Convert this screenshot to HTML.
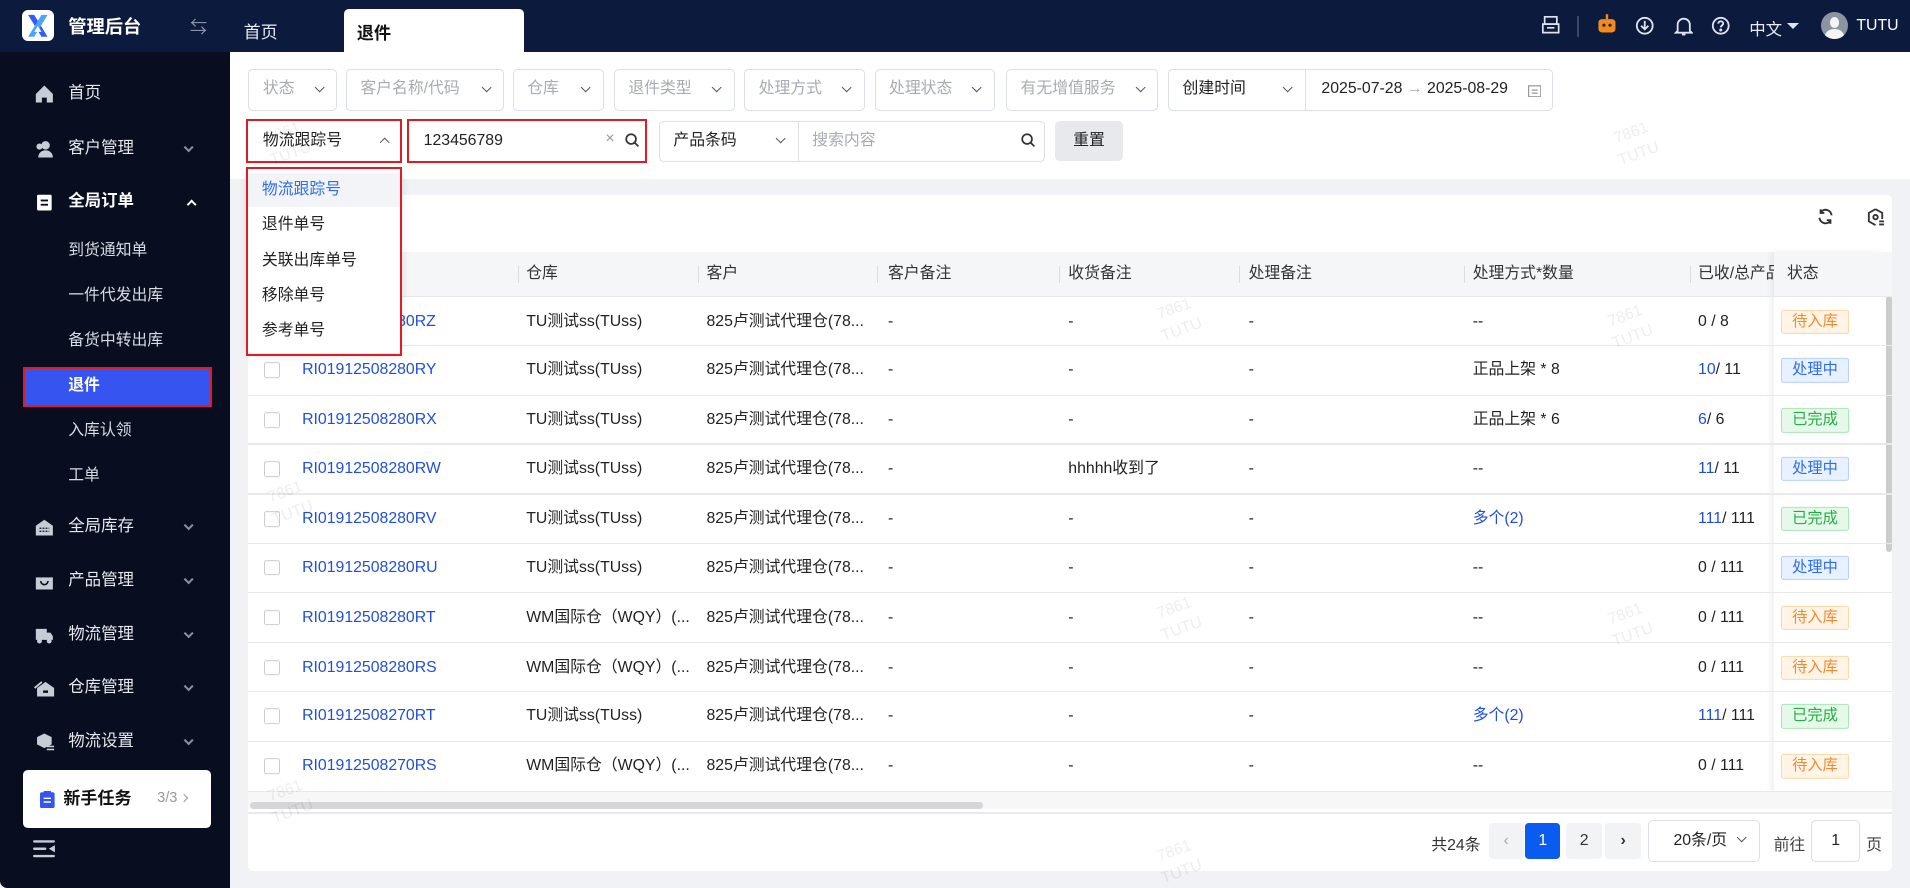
<!DOCTYPE html>
<html><head><meta charset="utf-8"><style>
*{box-sizing:border-box;margin:0;padding:0}
html,body{width:1910px;height:888px;overflow:hidden;background:#f0f2f5}
#root{zoom:1.21811;width:1568px;height:729px;position:relative;font-family:"Liberation Sans","Noto Sans CJK SC",sans-serif;font-size:13px;color:#222;background:#f0f2f5}
.a{position:absolute}
.hdr{left:0;top:0;width:1568px;height:43px;background:#0b1a3d}
.side{left:0;top:43px;width:189px;height:686px;background:#080d20;border-bottom-left-radius:6px}
.si{position:absolute;left:56px;color:#e6e8ee;font-size:13.5px;line-height:18px;transform:translateY(-50%)}
.sic{position:absolute;left:28px;width:17px;height:16px;transform:translateY(-50%)}
.chev{position:absolute;left:152px;width:6px;height:6px;border-right:2px solid #8a90a0;border-bottom:2px solid #8a90a0;transform:translateY(-70%) rotate(45deg)}
.sub{position:absolute;left:56px;color:#d8dbe3;font-size:13px;line-height:18px;transform:translateY(-50%)}
.box{position:absolute;height:34px;border:1px solid #dcdfe6;border-radius:4px;background:#fff;color:#a8abb2;font-size:13px;line-height:32px;padding-left:11px}
.dv{position:absolute;right:11px;top:11px;width:6px;height:6px;border-right:1.5px solid #555;border-bottom:1.5px solid #555;transform:rotate(45deg)}
.th{position:absolute;top:225px;transform:translateY(-50%);color:#333;font-size:13px;line-height:18px}
.sep{position:absolute;top:218px;width:1px;height:14px;background:#ddd}
.cell{position:absolute;transform:translateY(-50%);font-size:13px;line-height:18px;height:18px;color:#222;white-space:nowrap}
.lk{color:#1f4fe0}
.tag{position:absolute;left:1462px;width:56px;height:20px;transform:translateY(-50%);border-radius:2px;font-size:12.5px;text-align:center;line-height:18px;border:1px solid}
.t1{color:#f08a2c;background:#fff4e6;border-color:#ffd8a8}
.t2{color:#2d6df0;background:#e8f1ff;border-color:#b6d0ff}
.t3{color:#22b042;background:#e6f8ea;border-color:#a9e6b6}
.cb{position:absolute;left:217px;width:13px;height:13px;border:1px solid #ccc;border-radius:2px;transform:translateY(-50%);background:#fff}
.rl{position:absolute;left:204px;width:1349px;height:1px;background:#e8e9ec}
.wm{position:absolute;color:rgba(0,0,0,0.07);font-size:13px;transform:rotate(-20deg);line-height:18px;text-align:center}
.pg{position:absolute;top:676px;height:29px;border-radius:3px;background:#f2f3f5;text-align:center;line-height:29px;font-size:13px}
</style></head><body><div id="root">

<div class="a hdr"></div>
<div class="a" style="left:18px;top:8px;width:26px;height:26px;background:#fff;border-radius:5px">
<svg width="26" height="26" viewBox="0 0 26 26"><path d="M5 4h5l11 18h-5z" fill="#2f5bff"/><path d="M21 4h-5L5 22h5z" fill="#4aa3ff"/><path d="M13 13l3 5h-6z" fill="#fff"/></svg></div>
<div class="a" style="left:56px;top:11px;color:#fff;font-weight:bold;font-size:15px">管理后台</div>
<div class="a" style="left:156px;top:11px;color:#8a93a8;font-size:14px">⇆</div>
<div class="a" style="left:200px;top:15px;color:#e8ecf5;font-size:14px">首页</div>
<div class="a" style="left:282px;top:7px;width:148px;height:36px;background:#fff;border-radius:4px 4px 0 0"></div>
<div class="a" style="left:293px;top:16px;color:#111;font-weight:bold;font-size:14px">退件</div>
<svg class="a" style="left:1265px;top:12px" width="16" height="16" viewBox="0 0 16 16" fill="none" stroke="#dfe3ec" stroke-width="1.4"><rect x="3" y="1.5" width="10" height="6"/><path d="M1.5 7.5h13v7h-13z"/><path d="M5 10.5h6"/></svg>
<div class="a" style="left:1295px;top:13px;width:1px;height:17px;background:#3a4766"></div>
<svg class="a" style="left:1310px;top:11px" width="18" height="18" viewBox="0 0 18 18"><rect x="2" y="5" width="14" height="11" rx="3" fill="#f28a1c"/><rect x="8" y="1" width="2" height="4" fill="#f28a1c"/><circle cx="6.5" cy="10" r="1.3" fill="#222"/><circle cx="11.5" cy="10" r="1.3" fill="#222"/></svg>
<svg class="a" style="left:1342px;top:13px" width="16" height="16" viewBox="0 0 16 16" fill="none" stroke="#dfe3ec" stroke-width="1.5"><circle cx="8" cy="8" r="6.5"/><path d="M8 4v7M5 8l3 3 3-3"/></svg>
<svg class="a" style="left:1374px;top:12px" width="16" height="18" viewBox="0 0 16 18" fill="none" stroke="#dfe3ec" stroke-width="1.5"><path d="M3 13V8a5 5 0 0110 0v5l1.5 1.5h-13z"/><path d="M6.5 16h3"/></svg>
<svg class="a" style="left:1405px;top:13px" width="16" height="16" viewBox="0 0 16 16" fill="none" stroke="#dfe3ec" stroke-width="1.5"><circle cx="8" cy="8" r="6.5"/><path d="M6 6.3a2 2 0 114 0c0 1.3-2 1.5-2 3"/><circle cx="8" cy="11.5" r=".5" fill="#dfe3ec"/></svg>
<div class="a" style="left:1436px;top:13px;color:#e8ecf5;font-size:13.5px">中文</div>
<div class="a" style="left:1467px;top:19px;width:0;height:0;border-left:5px solid transparent;border-right:5px solid transparent;border-top:5px solid #dfe3ec"></div>
<div class="a" style="left:1495px;top:10px;width:22px;height:22px;border-radius:50%;background:#8c93a3;overflow:hidden"><div style="position:absolute;left:7px;top:4px;width:8px;height:9px;border-radius:50%;background:#f4f4f4"></div><div style="position:absolute;left:3px;top:14px;width:16px;height:12px;border-radius:50%;background:#f4f4f4"></div></div>
<div class="a" style="left:1524px;top:14px;color:#fff;font-size:13px">TUTU</div>

<div class="a side"></div>
<svg class="sic" style="top:77px" viewBox="0 0 16 16"><path d="M8 1L1 8v7h5v-4h4v4h5V8z" fill="#c8ccd6"/></svg><div class="si" style="top:77px">首页</div>
<svg class="sic" style="top:122px" viewBox="0 0 16 16"><circle cx="9" cy="5" r="3.5" fill="#c8ccd6"/><path d="M3 15c0-4 3-6 6-6s6 2 6 6z" fill="#c8ccd6"/><circle cx="4" cy="6" r="2.5" fill="#c8ccd6"/></svg><div class="si" style="top:122px">客户管理</div><div class="chev" style="top:122px"></div>
<svg class="sic" style="top:166px" viewBox="0 0 16 16"><rect x="2" y="2" width="12" height="13" rx="1" fill="#fff"/><rect x="5" y="6" width="6" height="1.5" fill="#080d20"/><rect x="5" y="9.5" width="6" height="1.5" fill="#080d20"/></svg><div class="si" style="top:166px;font-weight:bold;color:#fff">全局订单</div>
<div class="a" style="left:154px;top:165px;width:6px;height:6px;border-left:2px solid #fff;border-top:2px solid #fff;transform:rotate(45deg)"></div>
<div class="sub" style="top:206px">到货通知单</div>
<div class="sub" style="top:243px">一件代发出库</div>
<div class="sub" style="top:280px">备货中转出库</div>
<div class="a" style="left:19px;top:301px;width:155px;height:33px;background:#3554f0;border:2px solid #e01b24"></div>
<div class="sub" style="top:317px;color:#fff;font-weight:bold">退件</div>
<div class="sub" style="top:354px">入库认领</div>
<div class="sub" style="top:391px">工单</div>
<svg class="sic" style="top:433px" viewBox="0 0 16 16"><path d="M1 15V7l7-5 7 5v8z" fill="#c8ccd6"/><path d="M4 9h8M4 11.5h8" stroke="#080d20" stroke-dasharray="1.5 1"/></svg><div class="si" style="top:433px">全局库存</div><div class="chev" style="top:433px"></div>
<svg class="sic" style="top:477px" viewBox="0 0 16 16"><path d="M1 5h14v10H1z" fill="#c8ccd6"/><path d="M5 5a3 3 0 016 0M5 8a3 3 0 006 0" stroke="#080d20" fill="none" stroke-width="1.3"/></svg><div class="si" style="top:477px">产品管理</div><div class="chev" style="top:477px"></div>
<svg class="sic" style="top:521px" viewBox="0 0 16 16"><path d="M1 3h9v9H1zM10 6h3l2 3v3h-5z" fill="#c8ccd6"/><circle cx="4" cy="13" r="2" fill="#c8ccd6"/><circle cx="12" cy="13" r="2" fill="#c8ccd6"/></svg><div class="si" style="top:521px">物流管理</div><div class="chev" style="top:521px"></div>
<svg class="sic" style="top:565px" viewBox="0 0 16 16"><path d="M2 15V8l7-5 7 5v7z" fill="#c8ccd6"/><path d="M0 8l6-5" stroke="#c8ccd6" stroke-width="1.5"/><rect x="7" y="10" width="4" height="2" fill="#080d20"/></svg><div class="si" style="top:565px">仓库管理</div><div class="chev" style="top:565px"></div>
<svg class="sic" style="top:609px" viewBox="0 0 16 16"><path d="M8 1l6 3v6l-6 3-6-3V4z" fill="#c8ccd6"/><rect x="10" y="11" width="6" height="1.3" fill="#c8ccd6"/><rect x="10" y="13.5" width="6" height="1.3" fill="#c8ccd6"/></svg><div class="si" style="top:609px">物流设置</div><div class="chev" style="top:609px"></div>
<div class="a" style="left:19px;top:632px;width:154px;height:48px;background:#fff;border-radius:4px"></div>
<svg class="a" style="left:33px;top:649px" width="12" height="14" viewBox="0 0 12 14"><rect x="0" y="1" width="12" height="13" rx="1.5" fill="#3554f0"/><rect x="3" y="0" width="6" height="3" fill="#3554f0"/><path d="M3 6h6M3 9h6" stroke="#fff" stroke-width="1.2"/></svg>
<div class="a" style="left:52px;top:646px;font-weight:bold;font-size:14px;line-height:20px;color:#111">新手任务</div>
<div class="a" style="left:129px;top:648px;font-size:12px;line-height:16px;color:#999">3/3</div>
<div class="a" style="left:149px;top:653px;width:5px;height:5px;border-right:1.5px solid #999;border-top:1.5px solid #999;transform:rotate(45deg)"></div>
<svg class="a" style="left:27px;top:689px" width="18" height="16" viewBox="0 0 18 16" fill="#c8ccd6"><rect x="0" y="1" width="18" height="2" rx="1"/><rect x="0" y="7" width="11" height="2" rx="1"/><rect x="0" y="13" width="18" height="2" rx="1"/><path d="M18 5v6l-5-3z"/></svg>

<div class="a" style="left:189px;top:43px;width:1379px;height:104px;background:#fff"></div>
<div class="box" style="left:204px;top:57px;width:73px">状态<i class="dv"></i></div>
<div class="box" style="left:284px;top:57px;width:130px">客户名称/代码<i class="dv"></i></div>
<div class="box" style="left:421px;top:57px;width:75px">仓库<i class="dv"></i></div>
<div class="box" style="left:504px;top:57px;width:99px">退件类型<i class="dv"></i></div>
<div class="box" style="left:611px;top:57px;width:99px">处理方式<i class="dv"></i></div>
<div class="box" style="left:718px;top:57px;width:99px">处理状态<i class="dv"></i></div>
<div class="box" style="left:826px;top:57px;width:125px">有无增值服务<i class="dv"></i></div>
<div class="box" style="left:959px;top:57px;width:113px;color:#222;border-radius:4px 0 0 4px">创建时间<i class="dv"></i></div>
<div class="box" style="left:1071px;top:57px;width:204px;color:#222;border-radius:0 4px 4px 0;padding-left:13px">2025-07-28 <span style="color:#aaa">→</span> 2025-08-29</div>
<svg class="a" style="left:1254px;top:69px" width="11" height="11" viewBox="0 0 11 11" fill="none" stroke="#999"><rect x=".5" y="1.5" width="10" height="9"/><path d="M3 5h5M3 7.5h5"/></svg>

<div class="box" style="left:204px;top:99px;width:125px;color:#222;border-color:#fff;border-bottom:1px solid #2d6df0;border-radius:0">物流跟踪号</div>
<div class="a" style="left:313px;top:114px;width:6px;height:6px;border-left:1.5px solid #555;border-top:1.5px solid #555;transform:rotate(45deg)"></div>
<div class="a" style="left:202px;top:98px;width:128px;height:36px;border:2px solid #e01b24"></div>
<div class="box" style="left:336px;top:99px;width:194px;color:#222;border-color:#fff">123456789</div>
<div class="a" style="left:497px;top:107px;color:#999;font-size:13px">×</div>
<svg class="a" style="left:513px;top:109px" width="12" height="12" viewBox="0 0 12 12" fill="none" stroke="#333" stroke-width="1.4"><circle cx="5" cy="5" r="4"/><path d="M8 8l3 3"/></svg>
<div class="a" style="left:334px;top:98px;width:197px;height:36px;border:2px solid #e01b24"></div>
<div class="box" style="left:541px;top:99px;width:115px;color:#222;border-radius:4px 0 0 4px">产品条码<i class="dv"></i></div>
<div class="box" style="left:655px;top:99px;width:203px;border-radius:0 4px 4px 0">搜索内容</div>
<svg class="a" style="left:838px;top:109px" width="12" height="12" viewBox="0 0 12 12" fill="none" stroke="#333" stroke-width="1.4"><circle cx="5" cy="5" r="4"/><path d="M8 8l3 3"/></svg>
<div class="a" style="left:866px;top:99px;width:56px;height:33px;background:#e7e9ed;border-radius:4px;text-align:center;line-height:33px;color:#222">重置</div>

<div class="a" style="left:204px;top:160px;width:1349px;height:555px;background:#fff;border-radius:4px"></div>
<svg class="a" style="left:1492px;top:171px" width="14" height="14" viewBox="0 0 14 14" fill="none" stroke="#333" stroke-width="1.6"><path d="M12 6A5 5 0 003 3.5M2 8a5 5 0 009 2.5"/><path d="M3 1v3h3M11 13v-3H8"/></svg>
<svg class="a" style="left:1533px;top:171px" width="15" height="15" viewBox="0 0 15 15" fill="none" stroke="#333" stroke-width="1.5"><path d="M7 1l5.5 3v5M7 14l-5.5-3V4L7 1"/><circle cx="7" cy="7.5" r="1.8"/><path d="M10 11h4M10 13.5h4"/></svg>
<div class="a" style="left:204px;top:207px;width:1349px;height:36px;background:#f5f6f8"></div>
<div class="sep" style="left:425px"></div><div class="th" style="left:432px">仓库</div>
<div class="sep" style="left:573px"></div><div class="th" style="left:580px">客户</div>
<div class="sep" style="left:720px"></div><div class="th" style="left:729px">客户备注</div>
<div class="sep" style="left:869px"></div><div class="th" style="left:877px">收货备注</div>
<div class="sep" style="left:1017px"></div><div class="th" style="left:1025px">处理备注</div>
<div class="sep" style="left:1202px"></div><div class="th" style="left:1209px">处理方式*数量</div>
<div class="sep" style="left:1387px"></div><div class="th" style="left:1394px;width:62px;overflow:hidden;white-space:nowrap">已收/总产品</div>
<div class="a" style="left:1456px;top:207px;width:92px;height:444px;background:#fff;box-shadow:-3px 0 5px rgba(0,0,0,0.06)"></div>
<div class="a" style="left:1456px;top:207px;width:92px;height:36px;background:#f5f6f8"></div>
<div class="th" style="left:1467px">状态</div>
<div class="a" style="left:1548px;top:243px;width:5px;height:210px;background:#ccc;border-radius:3px"></div>

<div class="rl" style="top:243px"></div>
<div class="rl" style="top:283px"></div><div class="rl" style="top:324px"></div><div class="rl" style="top:364px"></div><div class="rl" style="top:405px"></div><div class="rl" style="top:446px"></div><div class="rl" style="top:486px"></div><div class="rl" style="top:527px"></div><div class="rl" style="top:567px"></div><div class="rl" style="top:608px"></div><div class="rl" style="top:649px"></div>

<div class="cb" style="top:264px"></div><div class="cell lk" style="left:248px;top:264px">RI01912508280RZ</div><div class="cell" style="left:432px;top:264px">TU测试ss(TUss)</div><div class="cell" style="left:580px;top:264px">825卢测试代理仓(78...</div><div class="cell" style="left:729px;top:264px">-</div><div class="cell" style="left:877px;top:264px">-</div><div class="cell" style="left:1025px;top:264px">-</div><div class="cell" style="left:1209px;top:264px">--</div><div class="cell" style="left:1394px;top:264px">0 / 8</div><div class="tag t1" style="top:264px">待入库</div>
<div class="cb" style="top:304px"></div><div class="cell lk" style="left:248px;top:304px">RI01912508280RY</div><div class="cell" style="left:432px;top:304px">TU测试ss(TUss)</div><div class="cell" style="left:580px;top:304px">825卢测试代理仓(78...</div><div class="cell" style="left:729px;top:304px">-</div><div class="cell" style="left:877px;top:304px">-</div><div class="cell" style="left:1025px;top:304px">-</div><div class="cell" style="left:1209px;top:304px">正品上架 * 8</div><div class="cell" style="left:1394px;top:304px"><span class="lk">10</span>/ 11</div><div class="tag t2" style="top:304px">处理中</div>
<div class="cb" style="top:345px"></div><div class="cell lk" style="left:248px;top:345px">RI01912508280RX</div><div class="cell" style="left:432px;top:345px">TU测试ss(TUss)</div><div class="cell" style="left:580px;top:345px">825卢测试代理仓(78...</div><div class="cell" style="left:729px;top:345px">-</div><div class="cell" style="left:877px;top:345px">-</div><div class="cell" style="left:1025px;top:345px">-</div><div class="cell" style="left:1209px;top:345px">正品上架 * 6</div><div class="cell" style="left:1394px;top:345px"><span class="lk">6</span>/ 6</div><div class="tag t3" style="top:345px">已完成</div>
<div class="cb" style="top:385px"></div><div class="cell lk" style="left:248px;top:385px">RI01912508280RW</div><div class="cell" style="left:432px;top:385px">TU测试ss(TUss)</div><div class="cell" style="left:580px;top:385px">825卢测试代理仓(78...</div><div class="cell" style="left:729px;top:385px">-</div><div class="cell" style="left:877px;top:385px">hhhhh收到了</div><div class="cell" style="left:1025px;top:385px">-</div><div class="cell" style="left:1209px;top:385px">--</div><div class="cell" style="left:1394px;top:385px"><span class="lk">11</span>/ 11</div><div class="tag t2" style="top:385px">处理中</div>
<div class="cb" style="top:426px"></div><div class="cell lk" style="left:248px;top:426px">RI01912508280RV</div><div class="cell" style="left:432px;top:426px">TU测试ss(TUss)</div><div class="cell" style="left:580px;top:426px">825卢测试代理仓(78...</div><div class="cell" style="left:729px;top:426px">-</div><div class="cell" style="left:877px;top:426px">-</div><div class="cell" style="left:1025px;top:426px">-</div><div class="cell lk" style="left:1209px;top:426px">多个(2)</div><div class="cell" style="left:1394px;top:426px"><span class="lk">111</span>/ 111</div><div class="tag t3" style="top:426px">已完成</div>
<div class="cb" style="top:466px"></div><div class="cell lk" style="left:248px;top:466px">RI01912508280RU</div><div class="cell" style="left:432px;top:466px">TU测试ss(TUss)</div><div class="cell" style="left:580px;top:466px">825卢测试代理仓(78...</div><div class="cell" style="left:729px;top:466px">-</div><div class="cell" style="left:877px;top:466px">-</div><div class="cell" style="left:1025px;top:466px">-</div><div class="cell" style="left:1209px;top:466px">--</div><div class="cell" style="left:1394px;top:466px">0 / 111</div><div class="tag t2" style="top:466px">处理中</div>
<div class="cb" style="top:507px"></div><div class="cell lk" style="left:248px;top:507px">RI01912508280RT</div><div class="cell" style="left:432px;top:507px">WM国际仓（WQY）(...</div><div class="cell" style="left:580px;top:507px">825卢测试代理仓(78...</div><div class="cell" style="left:729px;top:507px">-</div><div class="cell" style="left:877px;top:507px">-</div><div class="cell" style="left:1025px;top:507px">-</div><div class="cell" style="left:1209px;top:507px">--</div><div class="cell" style="left:1394px;top:507px">0 / 111</div><div class="tag t1" style="top:507px">待入库</div>
<div class="cb" style="top:548px"></div><div class="cell lk" style="left:248px;top:548px">RI01912508280RS</div><div class="cell" style="left:432px;top:548px">WM国际仓（WQY）(...</div><div class="cell" style="left:580px;top:548px">825卢测试代理仓(78...</div><div class="cell" style="left:729px;top:548px">-</div><div class="cell" style="left:877px;top:548px">-</div><div class="cell" style="left:1025px;top:548px">-</div><div class="cell" style="left:1209px;top:548px">--</div><div class="cell" style="left:1394px;top:548px">0 / 111</div><div class="tag t1" style="top:548px">待入库</div>
<div class="cb" style="top:588px"></div><div class="cell lk" style="left:248px;top:588px">RI01912508270RT</div><div class="cell" style="left:432px;top:588px">TU测试ss(TUss)</div><div class="cell" style="left:580px;top:588px">825卢测试代理仓(78...</div><div class="cell" style="left:729px;top:588px">-</div><div class="cell" style="left:877px;top:588px">-</div><div class="cell" style="left:1025px;top:588px">-</div><div class="cell lk" style="left:1209px;top:588px">多个(2)</div><div class="cell" style="left:1394px;top:588px"><span class="lk">111</span>/ 111</div><div class="tag t3" style="top:588px">已完成</div>
<div class="cb" style="top:629px"></div><div class="cell lk" style="left:248px;top:629px">RI01912508270RS</div><div class="cell" style="left:432px;top:629px">WM国际仓（WQY）(...</div><div class="cell" style="left:580px;top:629px">825卢测试代理仓(78...</div><div class="cell" style="left:729px;top:629px">-</div><div class="cell" style="left:877px;top:629px">-</div><div class="cell" style="left:1025px;top:629px">-</div><div class="cell" style="left:1209px;top:629px">--</div><div class="cell" style="left:1394px;top:629px">0 / 111</div><div class="tag t1" style="top:629px">待入库</div>

<div class="a" style="left:204px;top:650px;width:1349px;height:14px;background:#f7f7f8"></div>
<div class="a" style="left:205px;top:658px;width:602px;height:6px;background:#d6d6d8;border-radius:3px"></div>
<div class="a" style="left:204px;top:667px;width:1349px;height:1px;background:#e8e9ec"></div>

<div class="a" style="left:204px;top:138px;width:125px;height:152px;background:#fff;box-shadow:0 2px 8px rgba(0,0,0,.12)"></div>
<div class="a" style="left:204px;top:142px;width:125px;height:28px;background:#f3f4f7"></div>
<div class="cell" style="left:215px;top:156px;color:#2d6df0">物流跟踪号</div>
<div class="cell" style="left:215px;top:185px">退件单号</div>
<div class="cell" style="left:215px;top:214px">关联出库单号</div>
<div class="cell" style="left:215px;top:243px">移除单号</div>
<div class="cell" style="left:215px;top:272px">参考单号</div>
<div class="a" style="left:202px;top:137px;width:128px;height:155px;border:2px solid #e01b24"></div>

<div class="a" style="left:1175px;top:683px;color:#333">共24条</div>
<div class="pg" style="left:1222px;width:29px;color:#aaa">‹</div>
<div class="pg" style="left:1252px;width:29px;background:#0a5cf0;color:#fff">1</div>
<div class="pg" style="left:1286px;width:29px;color:#333">2</div>
<div class="pg" style="left:1318px;width:29px;color:#333;font-weight:bold">›</div>
<div class="box" style="left:1353px;top:673px;width:92px;height:35px;color:#222;padding-left:20px;line-height:33px">20条/页<i class="dv"></i></div>
<div class="a" style="left:1456px;top:683px;color:#444">前往</div>
<div class="box" style="left:1487px;top:673px;width:40px;height:35px;color:#222;padding-left:0;text-align:center;line-height:33px">1</div>
<div class="a" style="left:1532px;top:683px;color:#444">页</div>

<div class="wm" style="left:218px;top:100px">7861<br>TUTU</div>
<div class="wm" style="left:1325px;top:100px">7861<br>TUTU</div>
<div class="wm" style="left:950px;top:245px">7861<br>TUTU</div>
<div class="wm" style="left:1320px;top:250px">7861<br>TUTU</div>
<div class="wm" style="left:220px;top:395px">7861<br>TUTU</div>
<div class="wm" style="left:950px;top:490px">7861<br>TUTU</div>
<div class="wm" style="left:1320px;top:495px">7861<br>TUTU</div>
<div class="wm" style="left:220px;top:640px">7861<br>TUTU</div>
<div class="wm" style="left:950px;top:690px">7861<br>TUTU</div>
</div></body></html>
